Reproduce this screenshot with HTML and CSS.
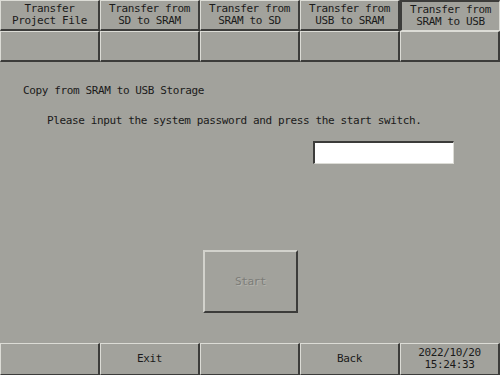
FILE: index.html
```html
<!DOCTYPE html>
<html>
<head>
<meta charset="utf-8">
<link rel="stylesheet" href="styles.css">
</head>
<body>
<div class="screen">
  <div class="tabs">
    <div class="btn"><span>Transfer<br>Project File</span></div>
    <div class="btn"><span>Transfer from<br>SD to SRAM</span></div>
    <div class="btn"><span>Transfer from<br>SRAM to SD</span></div>
    <div class="btn"><span>Transfer from<br>USB to SRAM</span></div>
    <div class="btn active"><span>Transfer from<br>SRAM to USB</span></div>
    <div class="btn"></div>
    <div class="btn"></div>
    <div class="btn"></div>
    <div class="btn"></div>
    <div class="btn"></div>
  </div>
  <div class="main">
    <div class="title">Copy from SRAM to USB Storage</div>
    <div class="msg">Please input the system password and press the start switch.</div>
    <div class="pwrow"><div class="input"></div></div>
    <div class="startrow"><div class="start">Start</div></div>
  </div>
  <div class="footer">
    <div class="btn"></div>
    <div class="btn"><span>Exit</span></div>
    <div class="btn"></div>
    <div class="btn"><span>Back</span></div>
    <div class="btn clock"><span>2022/10/20<br>15:24:33</span></div>
  </div>
</div>
</body>
</html>
```

FILE: styles.css
```css
html, body {
  margin: 0;
  padding: 0;
}
body {
  background: #a2a29c;
  font-family: "DejaVu Sans Mono", "Liberation Mono", monospace;
  font-size: 11px;
  letter-spacing: -0.38px;
  color: #1a1a1a;
}
.screen {
  width: 500px;
  height: 375px;
  display: flex;
  flex-direction: column;
  background: #a2a29c;
}
.tabs {
  display: grid;
  grid-template-columns: repeat(5, 100px);
  grid-template-rows: 31px 31px;
}
.btn {
  box-sizing: border-box;
  background: #a2a29c;
  border-top: 1px solid #dcdcd6;
  border-left: 1px solid #dcdcd6;
  border-right: 2px solid #3c3c3a;
  border-bottom: 2px solid #3c3c3a;
  display: flex;
  align-items: center;
  justify-content: center;
  text-align: center;
  line-height: 12px;
}
.btn.active {
  border-top: 2px solid #3c3c3a;
  border-left: 2px solid #3c3c3a;
  border-right: 1px solid #dcdcd6;
  border-bottom: 1px solid #dcdcd6;
}
.main {
  flex: 1;
  display: flex;
  flex-direction: column;
}
.title {
  margin: 23px 0 0 23px;
  line-height: 12px;
}
.msg {
  margin: 18px 0 0 47px;
  line-height: 12px;
}
.pwrow {
  display: flex;
  padding-left: 313px;
  margin-top: 14px;
}
.input {
  box-sizing: border-box;
  width: 141px;
  height: 23px;
  background: #ffffff;
  border-top: 2px solid #3c3c3a;
  border-left: 2px solid #3c3c3a;
  border-right: 1px solid #dcdcd6;
  border-bottom: 1px solid #dcdcd6;
}
.startrow {
  display: flex;
  padding-left: 203px;
  margin-top: 86px;
}
.start {
  box-sizing: border-box;
  width: 95px;
  height: 63px;
  border-top: 2px solid #d2d2cc;
  border-left: 2px solid #d2d2cc;
  border-right: 2px solid #3c3c3a;
  border-bottom: 2px solid #3c3c3a;
  display: flex;
  align-items: center;
  justify-content: center;
  color: #7c7c78;
  text-shadow: 1px 1px 0 #b4b4ae;
}
.footer {
  display: grid;
  grid-template-columns: repeat(5, 100px);
  height: 32px;
}
.footer .btn {
  border-bottom-width: 1px;
}
```
